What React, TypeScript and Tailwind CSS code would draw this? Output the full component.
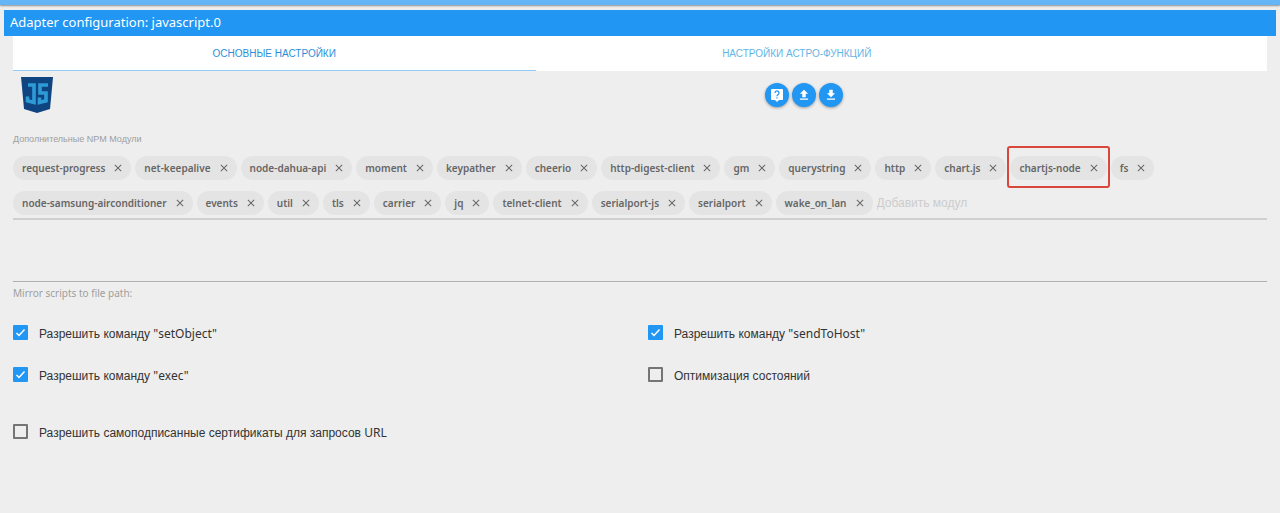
import React, { useState } from 'react'
import { MdClose, MdFileDownload, MdFileUpload } from 'react-icons/md'

const MODULES = [
  'request-progress', 'net-keepalive', 'node-dahua-api', 'moment', 'keypather', 'cheerio',
  'http-digest-client', 'gm', 'querystring', 'http', 'chart.js', 'chartjs-node', 'fs',
  'node-samsung-airconditioner', 'events', 'util', 'tls', 'carrier', 'jq', 'telnet-client',
  'serialport-js', 'serialport', 'wake_on_lan',
]

const Latin = ({ children }: { children: React.ReactNode }) => (
  <span className="font-['Noto_Sans',sans-serif]">{children}</span>
)

const Logo = () => (
  <svg className="ml-2 h-9 w-8" viewBox="0 0 32 36" role="img" aria-label="javascript">
    <path d="M0 0h32l-3 32-13 4-13-4z" fill="#0e4480" />
    <path d="M7 8H13V25.500L6.500 23.800V19.500" fill="none" stroke="#2f9bd6" strokeWidth="3.600" />
    <path d="M27 8H19V16H25V23.800L18.500 25.500V20.500" fill="none" stroke="#2f9bd6" strokeWidth="3.600" />
  </svg>
)

// speech bubble with a question mark
const HelpIcon = () => (
  <svg className="size-[14px]" viewBox="0 0 14 14" fill="none">
    <path d="M2 1h10a1 1 0 0 1 1 1v9a1 1 0 0 1-1 1H9l-2 2-2-2H2a1 1 0 0 1-1-1V2a1 1 0 0 1 1-1z" fill="#fff" />
    <path d="M5 5a2 2 0 1 1 3.200 1.500C7.400 7.100 7 7.400 7 8.300M7 9.300v1.300" stroke="#2196f3" strokeWidth="1.200" />
  </svg>
)

type RoundButtonProps = { label: string, children: React.ReactNode }

const RoundButton = ({ label, children }: RoundButtonProps) => (
  <button
    type="button"
    aria-label={label}
    className="flex size-6 items-center justify-center rounded-full bg-[#2196f3] text-sm text-white shadow-[0_1px_3px_rgba(0,0,0,0.35)]">
    {children}
  </button>
)

type ChipProps = { name: string, marked: boolean, onRemove: () => void }

const Chip = ({ name, marked, onRemove }: ChipProps) => (
  <div className="relative flex h-6 items-center gap-[7px] rounded-full bg-[#e4e4e4] pr-[7px] pl-[9px] font-['Noto_Sans',sans-serif] text-[10px] font-semibold text-[#666]">
    <span>{name}</span>
    <button type="button" aria-label={`remove ${name}`} onClick={onRemove} className="text-xs">
      <MdClose />
    </button>
    {marked && <div className="pointer-events-none absolute -inset-x-[3px] -top-[10px] -bottom-2 rounded-[3px] border-2 border-[#d9473a]" />}
  </div>
)

type CheckProps = { id: string, defaultChecked?: boolean, children: React.ReactNode }

const Check = ({ id, defaultChecked, children }: CheckProps) => (
  <div className="flex h-[42px] items-center gap-[11px]">
    <span className="relative flex size-[15px]">
      <input
        id={id}
        type="checkbox"
        defaultChecked={defaultChecked}
        className="peer size-[15px] appearance-none rounded-[1px] border-2 border-[#757575] checked:border-[#2196f3] checked:bg-[#2196f3]"
      />
      <svg className="pointer-events-none absolute inset-0 hidden peer-checked:block" viewBox="0 0 15 15" fill="none" stroke="#fff" strokeWidth="1.500">
        <path d="M3.500 8l2.500 2.500 5.500-6" />
      </svg>
    </span>
    <label htmlFor={id} className="pt-1 text-xs text-[#333]">{children}</label>
  </div>
)

const App = () => {

  const [modules, setModules] = useState(MODULES);
  const [tab, setTab] = useState(0);

  return (
    <div className="min-h-screen bg-[#eee] font-['Liberation_Sans',sans-serif]">
      <div className="h-[5px] bg-[#64b5f6] shadow-[0_1px_2px_rgba(0,0,0,0.4)]" />
      <div className="px-1 pt-[5px]">
        <header className="flex h-[26px] items-center bg-[#2196f3] px-[6px] font-['Noto_Sans',sans-serif] text-[13px] text-white">
          <h1>Adapter configuration: javascript.0</h1>
        </header>
        <main className="px-[9px]">
          <nav className="flex h-[35px] bg-white text-[10px]">
            {['ОСНОВНЫЕ НАСТРОЙКИ', 'НАСТРОЙКИ АСТРО-ФУНКЦИЙ'].map((title, i) => (
              <button
                key={title}
                type="button"
                onClick={() => setTab(i)}
                className={i === tab
                  ? 'w-5/12 border-b border-[#90caf9] pt-px text-[#2b90d9]'
                  : 'w-5/12 border-b border-transparent pt-px text-[#64b5e6]'}>
                {title}
              </button>
            ))}
          </nav>

          <div className="grid grid-cols-[3fr_2fr] pt-[6px]">
            <Logo />
            <div className="flex gap-[3px] pt-[6px]">
              <RoundButton label="help"><HelpIcon /></RoundButton>
              <RoundButton label="upload"><MdFileUpload /></RoundButton>
              <RoundButton label="download"><MdFileDownload /></RoundButton>
            </div>
          </div>

          <label htmlFor="new-module" className="mt-5 block text-[9px] leading-3 text-[#9e9e9e]">
            Дополнительные NPM Модули
          </label>
          <div className="mt-[11px] flex flex-wrap gap-x-1 gap-y-[11px] border-b-2 border-[#cfcfcf] pb-[3px]">
            {modules.map((name) => (
              <Chip
                key={name}
                name={name}
                marked={name === 'chartjs-node'}
                onRemove={() => setModules(modules.filter((m) => m !== name))}
              />
            ))}
            <input
              id="new-module"
              type="text"
              placeholder="Добавить модул"
              className="h-6 w-28 text-xs outline-none placeholder:text-[#ccc]"
            />
          </div>

          <input id="mirror" type="text" className="mt-6 block h-[38px] w-full border-b border-[#b0b0b0] outline-none" />
          <label htmlFor="mirror" className="mt-[5px] block font-['Noto_Sans',sans-serif] text-[10px] leading-3 text-[#9e9e9e]">
            Mirror scripts to file path:
          </label>

          <div className="mt-3 grid grid-cols-2 gap-x-4">
            <Check id="set-object" defaultChecked>Разрешить команду <Latin>"setObject"</Latin></Check>
            <Check id="send-to-host" defaultChecked>Разрешить команду <Latin>"sendToHost"</Latin></Check>
            <Check id="exec" defaultChecked>Разрешить команду <Latin>"exec"</Latin></Check>
            <Check id="optimize">Оптимизация состояний</Check>
          </div>
          <div className="mt-[15px]">
            <Check id="self-signed">Разрешить самоподписанные сертификаты для запросов <Latin>URL</Latin></Check>
          </div>
        </main>
      </div>
    </div>
  );
}

export default App
